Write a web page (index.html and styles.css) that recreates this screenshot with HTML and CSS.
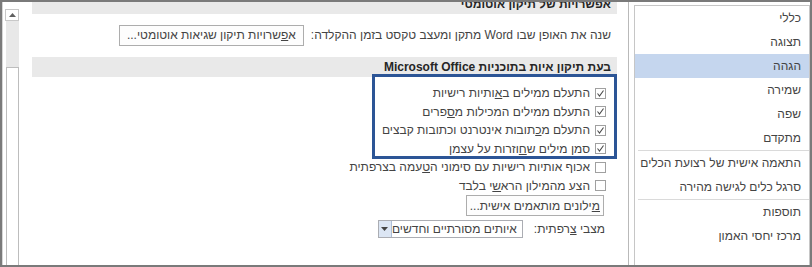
FILE: index.html
```html
<!DOCTYPE html>
<html lang="he">
<head>
    <meta charset="UTF-8">
    <title>אפשרויות Word - הגהה</title>
    <link rel="stylesheet" href="styles.css">
</head>
<body>
    <div class="dialog">
        <div class="pane">
            <div class="scrollbar">
                <div class="sb-btn">
                    <svg width="7" height="4" viewBox="0 0 7 4"><polygon points="0,4 3.5,0 7,4" fill="#606060"/></svg>
                </div>
                <div class="sb-track"></div>
                <div class="sb-thumb"></div>
            </div>
            <div class="content" dir="rtl">
                <div class="inner">
                    <div class="section">אפשרויות של תיקון אוטומטי</div>
                    <div class="autocorrect">
                        <span>שנה את האופן שבו Word מתקן ומעצב טקסט בזמן ההקלדה:</span>
                        <button class="btn">א<u>פ</u>שרויות תיקון שגיאות אוטומטי...</button>
                    </div>

                    <div class="section spelling">בעת תיקון איות בתוכניות Microsoft Office</div>
                    <ul class="options">
                        <li><span class="box checked"><svg width="9" height="9" viewBox="0 0 9 9"><polyline points="1.5,4.5 3.5,7 7.5,1.5" fill="none" stroke="#4a4a4a" stroke-width="1.1"/></svg></span><span>התעלם ממילים ב<u>א</u>ותיות רישיות</span></li>
                        <li><span class="box checked"><svg width="9" height="9" viewBox="0 0 9 9"><polyline points="1.5,4.5 3.5,7 7.5,1.5" fill="none" stroke="#4a4a4a" stroke-width="1.1"/></svg></span><span>התעלם ממילים המכילות מ<u>ס</u>פרים</span></li>
                        <li><span class="box checked"><svg width="9" height="9" viewBox="0 0 9 9"><polyline points="1.5,4.5 3.5,7 7.5,1.5" fill="none" stroke="#4a4a4a" stroke-width="1.1"/></svg></span><span>התעלם מ<u>כ</u>תובות אינטרנט וכתובות קבצים</span></li>
                        <li><span class="box checked"><svg width="9" height="9" viewBox="0 0 9 9"><polyline points="1.5,4.5 3.5,7 7.5,1.5" fill="none" stroke="#4a4a4a" stroke-width="1.1"/></svg></span><span>סמן מילים ש<u>ח</u>וזרות על עצמן</span></li>
                        <li><span class="box"></span><span>אכוף אותיות רישיות עם סימוני ה<u>ט</u>עמה בצרפתית</span></li>
                        <li><span class="box"></span><span>הצע מהמילון הרא<u>ש</u>י בלבד</span></li>
                    </ul>
                    <div class="dict-row">
                        <button class="btn"><u>מ</u>ילונים מותאמים אישית...</button>
                    </div>
                    <div class="modes">
                        <span>מצבי <u>צ</u>רפתית:</span>
                        <div class="select">
                            <span class="select-text">איותים מסורתיים וחדשים</span>
                            <span class="select-arrow"><svg width="7" height="4" viewBox="0 0 7 4"><polygon points="0,0 7,0 3.5,4" fill="#444"/></svg></span>
                        </div>
                    </div>
                </div>
                <div class="callout"></div>
            </div>
        </div>

        <div class="nav" dir="rtl">
            <div class="nav-item">כללי</div>
            <div class="nav-item">תצוגה</div>
            <div class="nav-item active">הגהה</div>
            <div class="nav-item">שמירה</div>
            <div class="nav-item">שפה</div>
            <div class="nav-item">מתקדם</div>
            <div class="nav-sep"></div>
            <div class="nav-item">התאמה אישית של רצועת הכלים</div>
            <div class="nav-item">סרגל כלים לגישה מהירה</div>
            <div class="nav-sep"></div>
            <div class="nav-item">תוספות</div>
            <div class="nav-item">מרכז יחסי האמון</div>
        </div>
    </div>
</body>
</html>
```

FILE: styles.css
```css
body {
    margin: 0;
    font-family: "Liberation Sans", "DejaVu Sans", sans-serif;
    font-size: 12px;
    color: #444;
}
.dialog {
    width: 812px;
    height: 267px;
    box-sizing: border-box;
    border: 2px solid #7a7a7a;
    background: #fff;
    display: flex;
    overflow: hidden;
}

/* left pane with its scrollbar */
.pane { width: 627px; box-sizing: border-box; border-left: 1px solid #d6d6d6; border-right: 1px solid #b9b9b9; display: flex; }
.scrollbar { width: 17px; display: flex; flex-direction: column; align-items: flex-start; }
.sb-btn { margin: 7px 0 0 2px; width: 14px; height: 12px; box-sizing: border-box; border: 1px solid #c8c8c8; display: flex; align-items: center; justify-content: center; }
.sb-track { margin-left: 3px; width: 13px; height: 46px; background: #e8e8e8; }
.sb-thumb { margin-left: 3px; width: 13px; flex: 1; box-sizing: border-box; border: 1px solid #bdbdbd; border-bottom: none; }

.content { flex: 1; position: relative; overflow: hidden; padding: 0 11px 0 12px; }
.inner { margin-top: -8px; }
.section { background: #e9e9e9; height: 20px; line-height: 20px; font-weight: bold; color: #262626; padding-right: 6px; white-space: nowrap; }
.section.spelling { margin-top: 11px; }
.autocorrect { display: flex; align-items: center; gap: 7px; height: 22px; margin-top: 10px; padding-right: 6px; }

.btn { font: inherit; color: #444; background: #fdfdfd; border: 1px solid #adadad; height: 21px; padding: 0 7px; border-radius: 0; }

.options { list-style: none; margin: 7px 0 0; padding: 0 11px 0 0; }
.options li { height: 18.5px; display: flex; align-items: center; gap: 5px; white-space: nowrap; }
.box { width: 11px; height: 11px; box-sizing: border-box; border: 1px solid #a0a0a0; background: #fff; display: flex; align-items: center; justify-content: center; }

.dict-row { padding-right: 13px; height: 21px; }
.dict-row .btn { padding: 0 3px; }

.modes { display: flex; align-items: center; gap: 11px; margin-top: 4px; padding-right: 12px; height: 18px; white-space: nowrap; }
.select { display: flex; width: 145px; height: 18px; box-sizing: border-box; border: 1px solid #abadb3; }
.select-text { flex: 1; padding-right: 5px; line-height: 16px; }
.select-arrow { width: 14px; background: #dce6f4; border-right: 1px solid #aebfd8; display: flex; align-items: center; justify-content: center; }

/* annotation drawn over the checked options */
.callout { position: absolute; left: 352px; top: 72px; width: 245px; height: 85px; box-sizing: border-box; border: 3px solid #2c5596; }

/* right navigation list */
.nav { width: 176px; margin: 3px 0 0 5px; box-sizing: border-box; border: 1px solid #c6c6c6; border-bottom: none; }
.nav-item { height: 24px; line-height: 24px; padding-right: 8px; white-space: nowrap; }
.nav-item.active { background: #c5d6ee; }
.nav-sep { height: 1px; background: #dadada; margin-left: 3px; }
```
